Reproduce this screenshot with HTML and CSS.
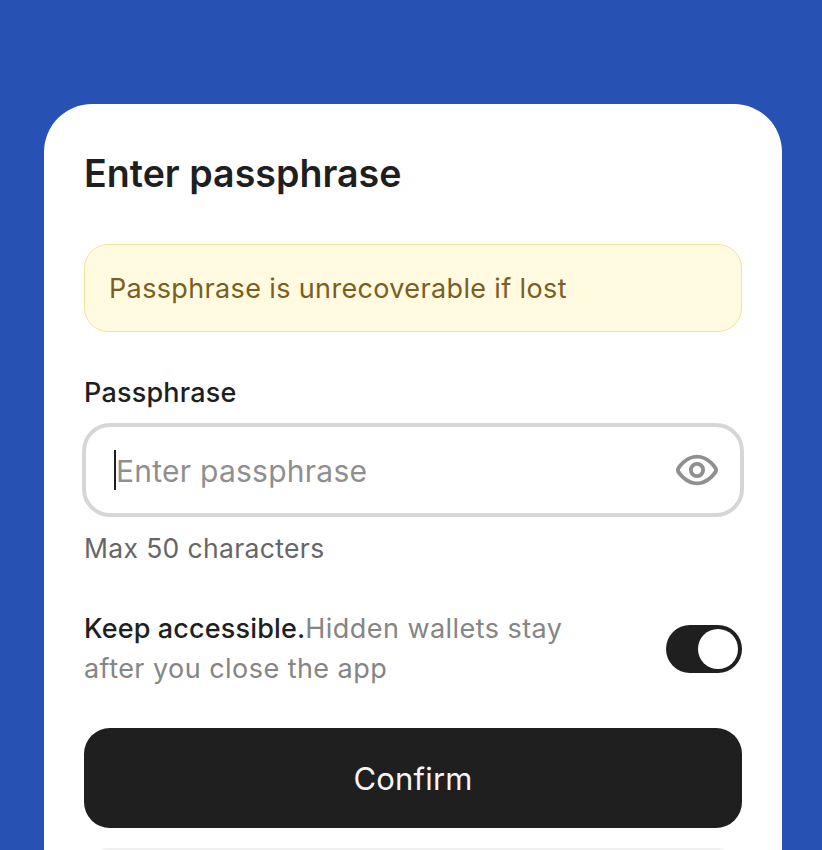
FILE: index.html
```html
<!DOCTYPE html>
<html>
  <head>
    <meta charset="utf-8">
    <title>Enter passphrase</title>
    <link rel="stylesheet" href="styles.css">
  </head>
  <body>
    <div class="sheet">
      <h1 class="title">Enter passphrase</h1>
      <div class="alert">Passphrase is unrecoverable if lost</div>
      <div class="label">Passphrase</div>
      <div class="field">
        <span class="caret"></span>
        <span class="placeholder">Enter passphrase</span>
        <svg class="eye" width="46" height="46" viewBox="0 0 24 24" fill="none" stroke="#8f8f8f" stroke-width="2" stroke-linejoin="round">
          <path d="M2 12c0-1 4-7 10-7s10 6 10 7-4 7-10 7-10-6-10-7z"/>
          <circle cx="12" cy="12" r="3.2"/>
        </svg>
      </div>
      <div class="hint">Max 50 characters</div>
      <div class="keep">
        <div class="keep-text"><span class="keep-strong">Keep accessible.</span>Hidden wallets stay after you close the app</div>
        <div class="toggle"><span class="knob"></span></div>
      </div>
      <div class="btn btn-primary">Confirm</div>
      <div class="btn btn-secondary"></div>
    </div>
  </body>
</html>
```

FILE: styles.css
```css
html, body {
  height: 100%;
}

body {
  margin: 0;
  height: 850px;
  overflow: hidden;
  background-color: #2752b4;
  font-family: "Inter", "Liberation Sans", sans-serif;
  color: #1f1f1f;
}

.sheet {
  box-sizing: border-box;
  width: 738px;
  height: 746px;
  margin: 104px 0 0 44px;
  padding: 46px 40px 0;
  overflow: hidden;
  background-color: #fff;
  border-radius: 48px 48px 0 0;
}

.title {
  margin: 0;
  font-size: 37.6px;
  line-height: 48px;
  font-weight: 600;
}

.alert {
  box-sizing: border-box;
  height: 88px;
  margin-top: 46px;
  padding: 0 24px;
  display: flex;
  align-items: center;
  font-size: 27px;
  letter-spacing: 0.36px;
  color: #7a5e22;
  background-color: #fffae0;
  border: 1px solid #f2e39b;
  border-radius: 24px;
}

.label {
  margin-top: 43px;
  font-size: 27px;
  line-height: 36px;
  font-weight: 500;
  letter-spacing: 0.2px;
}

.field {
  box-sizing: border-box;
  width: 662px;
  height: 94px;
  margin: 12px 0 0 -2px;
  padding: 0 20px 0 28px;
  display: flex;
  align-items: center;
  border: 4px solid #d6d6d6;
  border-radius: 28px;
}

.caret {
  width: 2px;
  height: 40px;
  background-color: #1f1f1f;
}

.placeholder {
  flex: 1;
  padding-top: 2px;
  font-size: 30px;
  letter-spacing: 0.25px;
  color: #8f8f8f;
}

.eye {
  flex-shrink: 0;
}

.hint {
  margin-top: 13px;
  font-size: 26.5px;
  line-height: 36px;
  letter-spacing: 0.35px;
  color: #666;
}

.keep {
  margin-top: 42px;
  display: flex;
  justify-content: space-between;
  align-items: center;
}

.keep-text {
  width: 500px;
  padding-top: 1px;
  font-size: 27px;
  line-height: 40px;
  letter-spacing: 0.45px;
  color: #858585;
}

.keep-strong {
  color: #1f1f1f;
  font-weight: 500;
  letter-spacing: 0.15px;
}

.toggle {
  box-sizing: border-box;
  width: 76px;
  height: 48px;
  padding: 4px;
  display: flex;
  justify-content: flex-end;
  background-color: #1f1f1f;
  border-radius: 24px;
}

.knob {
  width: 40px;
  height: 40px;
  background-color: #fff;
  border-radius: 50%;
}

.btn {
  height: 100px;
  display: flex;
  align-items: center;
  justify-content: center;
  font-size: 31px;
  letter-spacing: 0.2px;
  border-radius: 26px;
}

.btn-primary {
  margin-top: 39px;
  color: #f5f5f5;
  background-color: #1f1f1f;
}

.btn-secondary {
  margin-top: 20px;
  background-color: #f0f0f0;
}
```
